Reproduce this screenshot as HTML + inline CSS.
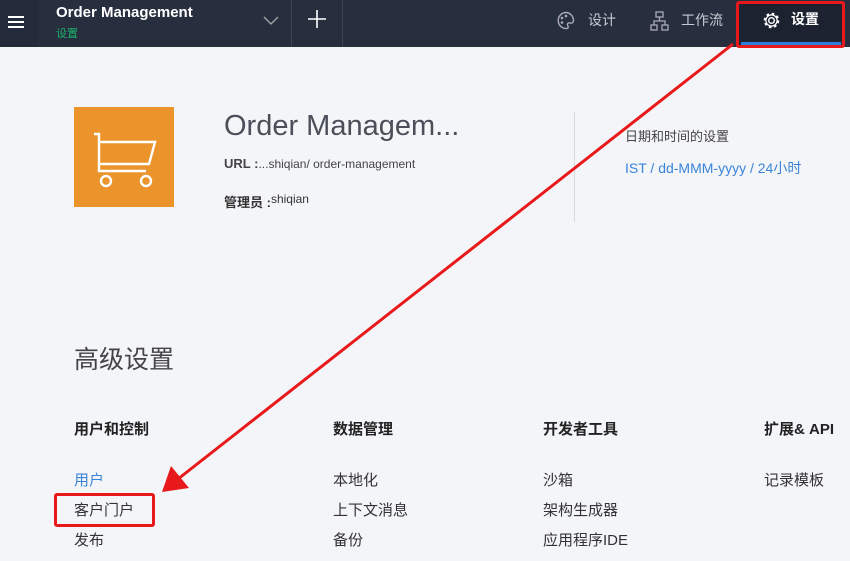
<!DOCTYPE html>
<html><head><meta charset="utf-8"><style>
*{margin:0;padding:0;box-sizing:border-box}
body{width:850px;height:561px;overflow:hidden;background:#f4f5f8;font-family:"Liberation Sans","Noto Sans CJK SC",sans-serif;position:relative;color:#333}
.top{position:absolute;left:0;top:0;width:850px;height:47px;background:#272e3e}
.t{position:absolute;white-space:nowrap}
</style></head><body>
<div class="top">
  <div style="position:absolute;left:0;top:0;width:38px;height:47px;background:#232a39"></div>
  <div style="position:absolute;left:8px;top:16px;width:16px;height:1.5px;background:#fff;box-shadow:0 5px 0 #fff,0 10px 0 #fff"></div>
  <div class="t" style="left:56px;top:4px;color:#fff;font-size:15px;font-weight:bold">Order Management</div>
  <div class="t" style="left:56px;top:25px;color:#1db36a;font-size:11px">设置</div>
  <svg style="position:absolute;left:262px;top:14px" width="18" height="12"><path d="M2 3 L9 10 L16 3" stroke="#aaa" stroke-width="1.3" fill="none"/></svg>
  <div style="position:absolute;left:291px;top:0;width:1px;height:47px;background:#3d4555"></div>
  <div style="position:absolute;left:342px;top:0;width:1px;height:47px;background:#3d4555"></div>
  <svg style="position:absolute;left:307px;top:9px" width="20" height="20"><path d="M10 1V19M1 10H19" stroke="#fff" stroke-width="1.6"/></svg>
  <svg style="position:absolute;left:556px;top:11px" width="19" height="19"><path d="M9.5 1.5A8 8 0 1 0 11 17.5C13 17 12 15 11.5 14C11 12.5 12.5 11.5 14 12C16 12.5 17.5 11.5 17.5 9.5A8 8 0 0 0 9.5 1.5Z" stroke="#aab" stroke-width="1.4" fill="none"/><circle cx="6" cy="7" r="1.3" fill="#aab"/><circle cx="10" cy="5" r="1.3" fill="#aab"/><circle cx="6" cy="11.5" r="1.3" fill="#aab"/></svg>
  <div class="t" style="left:588px;top:10px;color:#c7cad1;font-size:14px">设计</div>
  <svg style="position:absolute;left:650px;top:11px" width="19" height="20"><g stroke="#aab" stroke-width="1.3" fill="none"><rect x="6" y="1" width="7" height="5"/><rect x="1" y="14" width="6" height="5"/><rect x="12" y="14" width="6" height="5"/><path d="M9.5 6V10M4 14V10H15V14"/></g></svg>
  <div class="t" style="left:681px;top:10px;color:#c7cad1;font-size:14px">工作流</div>
  <div style="position:absolute;left:738px;top:2px;width:106px;height:45px;background:#1c2230"></div>
  <div style="position:absolute;left:741px;top:42px;width:100px;height:3px;background:#2d7fdc"></div>
  <svg style="position:absolute;left:762px;top:11px" width="19" height="19"><circle cx="9.5" cy="9.5" r="2.8" stroke="#fff" stroke-width="1.4" fill="none"/><circle cx="9.5" cy="9.5" r="6.5" stroke="#fff" stroke-width="2.6" stroke-dasharray="2.5 2.6" fill="none"/><circle cx="9.5" cy="9.5" r="5.6" stroke="#fff" stroke-width="1.2" fill="none"/></svg>
  <div class="t" style="left:791px;top:9px;color:#fff;font-size:14px;font-weight:bold">设置</div>
</div>
<div style="position:absolute;left:736px;top:1px;width:109px;height:47px;border:3px solid #e8191a;border-radius:3px"></div>

<div style="position:absolute;left:74px;top:107px;width:100px;height:100px;background:#ea942b"></div>
<svg style="position:absolute;left:74px;top:107px" width="100" height="100"><g stroke="#fff" stroke-width="2.4" fill="none"><path d="M20 27H25V64H72"/><path d="M25 35H81L75 57H25"/><circle cx="32" cy="74" r="5"/><circle cx="72" cy="74" r="5"/></g></svg>
<div class="t" style="left:224px;top:110px;font-size:29px;color:#4a4f5a">Order Managem...</div>
<div class="t" style="left:224px;top:156px;font-size:13px;color:#444"><b>URL :</b><span style="font-size:12px">...shiqian/ order-management</span></div>
<div class="t" style="left:224px;top:192px;font-size:13px;color:#333"><b>管理员 :</b><span style="font-size:12px;vertical-align:4px">shiqian</span></div>
<div style="position:absolute;left:574px;top:112px;width:1px;height:110px;background:#d6d9de"></div>
<div class="t" style="left:625px;top:126px;font-size:13px;color:#444">日期和时间的设置</div>
<div class="t" style="left:625px;top:158px;font-size:14px;color:#3a84d8">IST / dd-MMM-yyyy / 24小时</div>

<div class="t" style="left:74px;top:340px;font-size:25px;color:#444">高级设置</div>
<div class="t" style="left:74px;top:418px;font-size:15px;font-weight:bold;color:#222">用户和控制</div>
<div class="t" style="left:333px;top:418px;font-size:15px;font-weight:bold;color:#222">数据管理</div>
<div class="t" style="left:543px;top:418px;font-size:15px;font-weight:bold;color:#222">开发者工具</div>
<div class="t" style="left:764px;top:418px;font-size:15px;font-weight:bold;color:#222">扩展&amp; API</div>
<div class="t" style="left:74px;top:469px;font-size:15px;color:#3a84d8">用户</div>
<div class="t" style="left:74px;top:499px;font-size:15px;color:#333">客户门户</div>
<div class="t" style="left:74px;top:529px;font-size:15px;color:#333">发布</div>
<div class="t" style="left:333px;top:469px;font-size:15px;color:#333">本地化</div>
<div class="t" style="left:333px;top:499px;font-size:15px;color:#333">上下文消息</div>
<div class="t" style="left:333px;top:529px;font-size:15px;color:#333">备份</div>
<div class="t" style="left:543px;top:469px;font-size:15px;color:#333">沙箱</div>
<div class="t" style="left:543px;top:499px;font-size:15px;color:#333">架构生成器</div>
<div class="t" style="left:543px;top:529px;font-size:15px;color:#333">应用程序IDE</div>
<div class="t" style="left:764px;top:469px;font-size:15px;color:#333">记录模板</div>
<div style="position:absolute;left:54px;top:493px;width:101px;height:34px;border:3px solid #e8191a;border-radius:3px"></div>
<svg style="position:absolute;left:0;top:0" width="850" height="561"><path d="M733 44L178 479" stroke="#e8191a" stroke-width="3"/><path d="M162 492L171 466L189 488Z" fill="#e8191a"/></svg>
</body></html>
